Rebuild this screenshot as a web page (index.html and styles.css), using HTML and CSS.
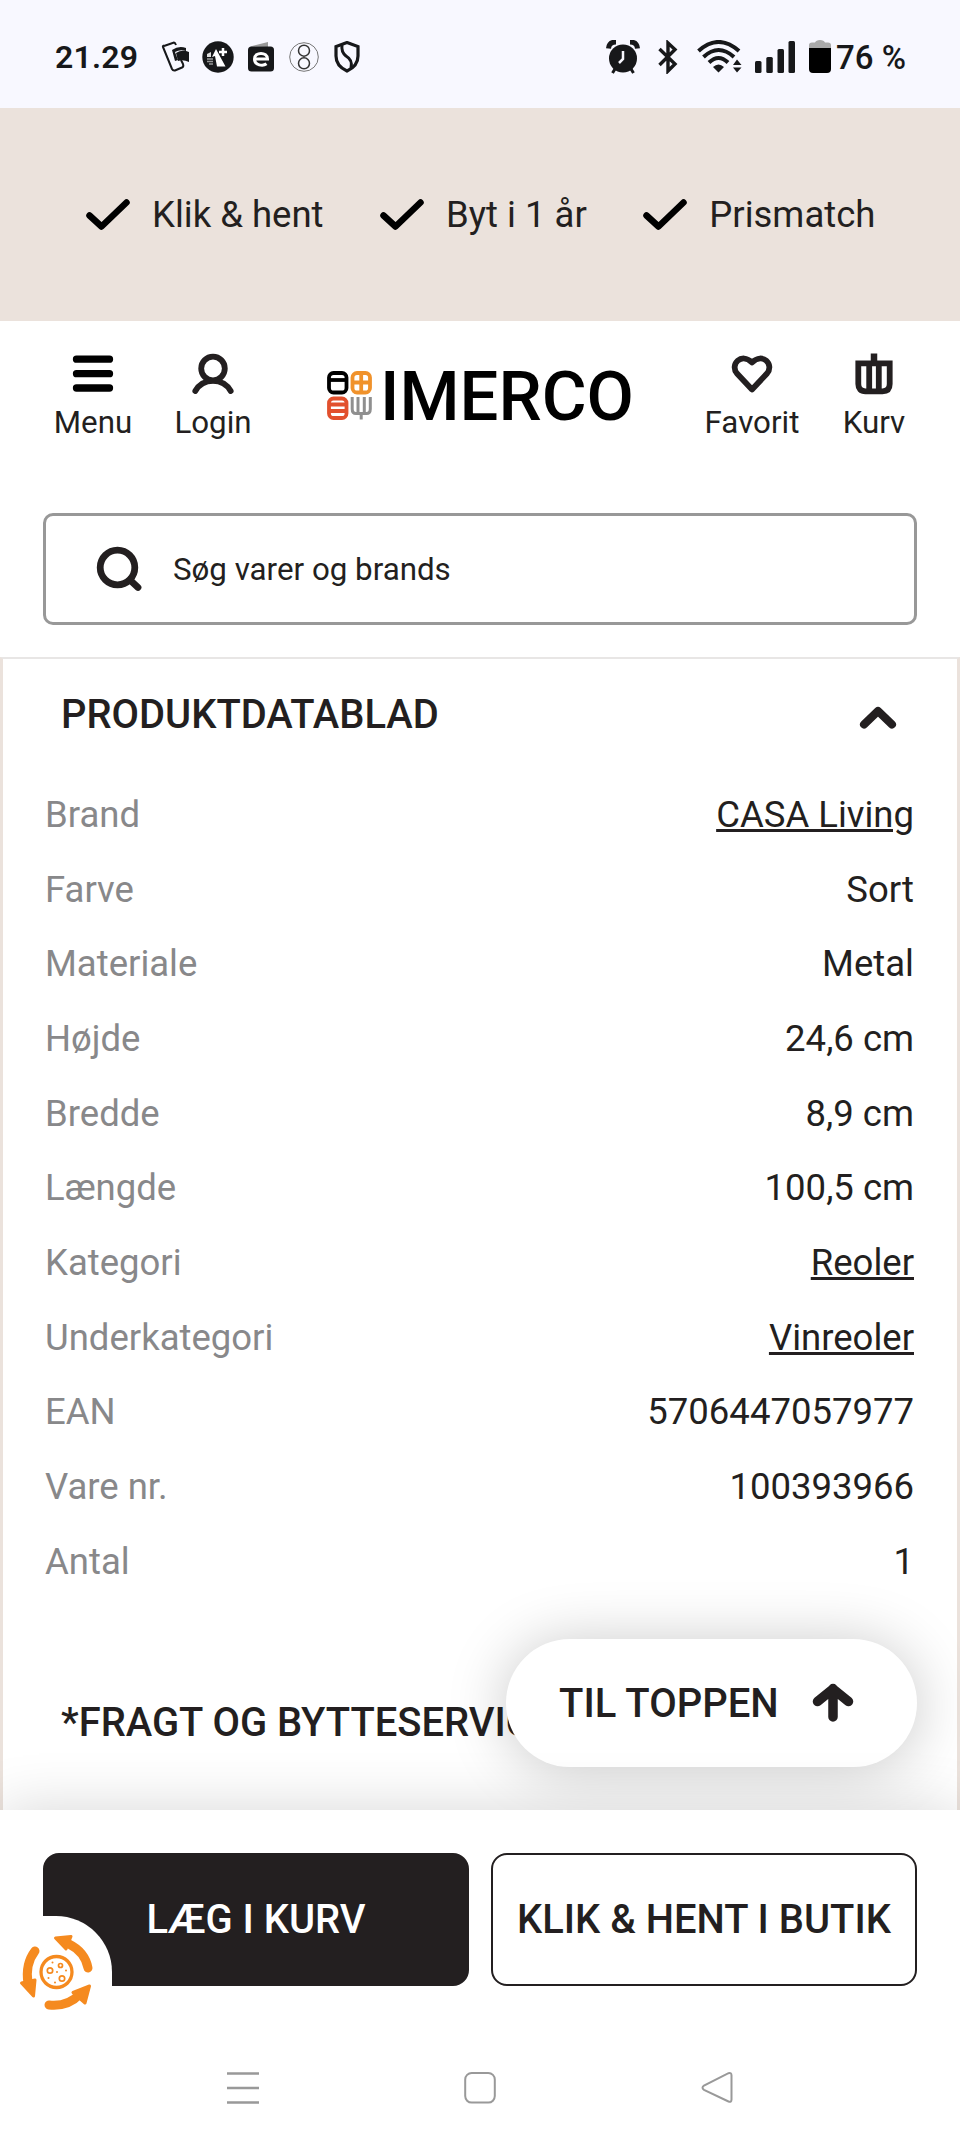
FILE: index.html
```html
<!DOCTYPE html>
<html lang="da">
<head>
  <meta charset="UTF-8" />
  <meta name="viewport" content="width=device-width, initial-scale=1.0"/>
  <title>Imerco</title>
  <link rel="stylesheet" href="styles.css">
</head>
<body>
  <div class="status-bar">
    <span class="time">21.29</span>
    <svg class="s-phone" width="30" height="32" viewBox="0 0 30 32">
      <path d="M3 5 L13 1.5 Q14 1.5 15 4 M2 6 Q1.5 5 3 4.500 M2 6 L11 28 Q12 30 14 29.500 L21 26.500 Q23 25.500 22 23 L20 19" fill="none" stroke="#17181a" stroke-width="2"/>
      <path d="M11 9 Q18 4 25 7 L25 10 Q19 8 14 11 L17 19 L14 20 Z" fill="#17181a"/>
      <path d="M15 12 Q21 8 28 11 V21 Q22 18 17 20 Z" fill="#17181a"/>
    </svg>
    <svg class="s-chess" width="32" height="32" viewBox="0 0 32 32">
      <circle cx="16" cy="16" r="15.700" fill="#17181a"/>
      <path d="M14 8 L23.500 25.500 H15 L13 15 L10 16 Z" fill="#fff"/>
      <path d="M21 7 V15 M17 11 H25" stroke="#fff" stroke-width="2.500"/>
      <path d="M5 13 L9 11 V16 H5 Z" fill="#ddd"/>
      <path d="M5 18 H11 M5 20.500 H11 M7 23 H11" stroke="#999" stroke-width="1.500"/>
    </svg>
    <svg class="s-e" width="26" height="32" viewBox="0 0 26 32">
      <path d="M2 5.500 L20 1 V6 Z" fill="#999"/>
      <rect x="0" y="5.500" width="26" height="25" rx="3.500" fill="#17181a"/>
      <path d="M6.500 18 H19.500 C19.500 10.500 6.500 10.500 6.500 18 C6.500 24.500 15 25.500 18.500 22.800" fill="none" stroke="#fff" stroke-width="3"/>
    </svg>
    <svg class="s-eight" width="30" height="32" viewBox="0 0 30 32">
      <circle cx="15" cy="16" r="14.300" fill="none" stroke="#777" stroke-width="1"/>
      <circle cx="15" cy="9.700" r="5.500" fill="none" stroke="#333" stroke-width="1.500"/>
      <circle cx="15" cy="22.300" r="5.500" fill="none" stroke="#333" stroke-width="1.500"/>
    </svg>
    <svg class="s-shield" width="26" height="32" viewBox="0 0 26 32">
      <path d="M13 1.500 L24 5.500 V15 Q24 25 13 30 Q2 25 2 15 V5.500 Z" fill="none" stroke="#17181a" stroke-width="3.200"/>
      <path d="M8 4 Q7 11 12 15 Q19 19 17 27" fill="none" stroke="#17181a" stroke-width="3"/>
    </svg>
    <svg class="s-alarm" width="34" height="34" viewBox="0 0 34 34">
      <circle cx="17" cy="18.500" r="14" fill="#17181a"/>
      <path d="M2.500 8.500 Q3 2 10 2 M24 2 Q31 2 31.500 8.500" fill="none" stroke="#17181a" stroke-width="5"/>
      <path d="M9 29 L6.500 33 M25 29 L27.500 33" stroke="#17181a" stroke-width="3"/>
      <path d="M17 11 V19 L13 23" fill="none" stroke="#f8f8ff" stroke-width="2.500"/>
    </svg>
    <svg class="s-bt" width="20" height="34" viewBox="0 0 20 34">
      <path d="M1.500 9 L17 24 L10 31 V3 L17 9.500 L1.500 25" fill="none" stroke="#17181a" stroke-width="3.400"/>
    </svg>
    <svg class="s-wifi" width="46" height="34" viewBox="0 0 46 34">
      <path d="M1.500 11 Q21.500 -7 42 11 M6.500 17 Q21.500 3 37 17 M12 22.500 Q21.500 13.500 31 22.500" fill="none" stroke="#17181a" stroke-width="4"/>
      <path d="M16 27 Q21.500 22 27 27 L21.500 32.500 Z M36 25 L40 19.500 L44.500 25 Z M36 27.500 H44.500 L40 32.500 Z" fill="#17181a"/>
    </svg>
    <svg class="s-signal" width="40" height="34" viewBox="0 0 40 34">
      <g fill="#17181a">
        <rect x="0" y="21" width="6.500" height="12" rx="1.500"/>
        <rect x="11.300" y="17" width="6.500" height="16" rx="1.500"/>
        <rect x="22.500" y="9" width="6.500" height="24" rx="1.500"/>
        <rect x="33.500" y="1" width="6.500" height="32" rx="1.500"/>
      </g>
    </svg>
    <svg class="s-battery" width="22" height="34" viewBox="0 0 22 34">
      <path d="M0 8 V5 Q0 2.500 3 2.500 H6 Q7 0 11 0 Q15 0 16 2.500 H19 Q22 2.500 22 5 V8 Z" fill="#aaa"/>
      <path d="M0 8 H22 V29 Q22 33 18 33 H4 Q0 33 0 29 Z" fill="#000"/>
    </svg>
    <span class="percent">76 %</span>
  </div>

  <div class="usp-bar">
    <div class="usp">
      <svg width="44" height="32" viewBox="0 0 44 32"><path d="M3.500 16.500 L15.500 27.500 L40.500 3.500" fill="none" stroke="#000" stroke-width="6.500" stroke-linecap="round" stroke-linejoin="round"/></svg>
      <span>Klik &amp; hent</span>
    </div>
    <div class="usp">
      <svg width="44" height="32" viewBox="0 0 44 32"><path d="M3.500 16.500 L15.500 27.500 L40.500 3.500" fill="none" stroke="#000" stroke-width="6.500" stroke-linecap="round" stroke-linejoin="round"/></svg>
      <span>Byt i 1 år</span>
    </div>
    <div class="usp">
      <svg width="44" height="32" viewBox="0 0 44 32"><path d="M3.500 16.500 L15.500 27.500 L40.500 3.500" fill="none" stroke="#000" stroke-width="6.500" stroke-linecap="round" stroke-linejoin="round"/></svg>
      <span>Prismatch</span>
    </div>
  </div>

  <header class="header">
    <div class="top-nav">
      <a class="nav-item menu">
        <svg width="42" height="42" viewBox="0 0 42 42"><path d="M4.500 6.200 H37.500 M4.500 20.700 H37.500 M4.500 35 H37.500" stroke="#000" stroke-width="7.300" stroke-linecap="round"/></svg>
        <span>Menu</span>
      </a>
      <a class="nav-item login">
        <svg width="42" height="42" viewBox="0 0 42 42"><g fill="none" stroke="#231f20" stroke-width="5.800" stroke-linecap="round"><circle cx="21" cy="15.500" r="11.800"/><path d="M3.300 38 C11 24.500 31 24.500 38.700 38"/></g></svg>
        <span>Login</span>
      </a>
      <svg class="logo" width="306" height="50" viewBox="0 0 306 50">
        <g fill="none" stroke-width="3.800">
          <g stroke="#000"><rect x="2" y="2" width="17.500" height="19.500" rx="4.500"/><path d="M2 9 H19.500"/></g>
          <g stroke="#f0922b"><rect x="25.500" y="2" width="17.500" height="19.500" rx="4.500"/><path d="M25.500 11.500 H43 M34.200 2 V21.500"/></g>
          <g stroke="#e2502d"><rect x="2" y="27.500" width="17.500" height="19.500" rx="4.500"/><path d="M2 33.500 H19.500 M2 40 H19.500"/></g>
          <path d="M25.200 26 V38 Q25.200 42.500 29 42.500 H39.500 Q43.300 42.500 43.300 38 V26 M31 26 V42 M37.300 26 V42 M34.200 42 V48.500" stroke="#8f8f8f" stroke-width="3"/>
        </g>
        <text class="wordmark" x="53" y="49" textLength="254" lengthAdjust="spacingAndGlyphs">IMERCO</text>
      </svg>
      <a class="nav-item favorit">
        <svg width="42" height="42" viewBox="0 0 42 42"><path d="M21 36.500 L6 20.500 C-1.500 11.500 10.500 -1 21 9.500 C31.500 -1 43.500 11.500 36 20.500 Z" fill="none" stroke="#231f20" stroke-width="5.800" stroke-linejoin="round"/></svg>
        <span>Favorit</span>
      </a>
      <a class="nav-item kurv">
        <svg width="42" height="42" viewBox="0 0 42 42"><path d="M5.300 10.300 H36.700 V31 Q36.700 38.300 29.500 38.300 H12.500 Q5.300 38.300 5.300 31 Z M16.200 10 V38 M25.800 10 V38" fill="none" stroke="#231f20" stroke-width="5.800"/><path d="M21 0.500 V10" stroke="#231f20" stroke-width="6.500"/></svg>
        <span>Kurv</span>
      </a>
    </div>
    <div class="search">
      <svg width="48" height="48" viewBox="0 0 48 48"><g fill="none" stroke="#231f20" stroke-width="6.800" stroke-linecap="round"><circle cx="22.500" cy="22.500" r="17.300"/><path d="M35 35 L43 42.500"/></g></svg>
      <span>Søg varer og brands</span>
    </div>
  </header>

  <main class="panel">
    <div class="section-title">
      <h2>PRODUKTDATABLAD</h2>
      <svg width="38" height="24" viewBox="0 0 38 24"><path d="M5 18.500 L19 5 L33 18.500" fill="none" stroke="#231f20" stroke-width="8" stroke-linecap="round" stroke-linejoin="round"/></svg>
    </div>
    <dl class="specs">
      <div class="spec"><dt>Brand</dt><dd class="link">CASA Living</dd></div>
      <div class="spec"><dt>Farve</dt><dd>Sort</dd></div>
      <div class="spec"><dt>Materiale</dt><dd>Metal</dd></div>
      <div class="spec"><dt>Højde</dt><dd>24,6 cm</dd></div>
      <div class="spec"><dt>Bredde</dt><dd>8,9 cm</dd></div>
      <div class="spec"><dt>Længde</dt><dd>100,5 cm</dd></div>
      <div class="spec"><dt>Kategori</dt><dd class="link">Reoler</dd></div>
      <div class="spec"><dt>Underkategori</dt><dd class="link">Vinreoler</dd></div>
      <div class="spec"><dt>EAN</dt><dd>5706447057977</dd></div>
      <div class="spec"><dt>Vare nr.</dt><dd>100393966</dd></div>
      <div class="spec"><dt>Antal</dt><dd>1</dd></div>
    </dl>
    <div class="section-title">
      <h2>*FRAGT OG BYTTESERVICE</h2>
    </div>
    <a class="to-top">
      <span>TIL TOPPEN</span>
      <svg width="42" height="40" viewBox="0 0 42 40"><path d="M21 5.500 V34 M5.500 18.500 L21 6 L36.500 18.500" fill="none" stroke="#231f20" stroke-width="9.500" stroke-linecap="round" stroke-linejoin="round"/></svg>
    </a>
  </main>

  <div class="buy-bar">
    <button class="btn btn-dark">LÆG I KURV</button>
    <button class="btn btn-light">KLIK &amp; HENT I BUTIK</button>
    <div class="cookie">
      <svg width="76" height="80" viewBox="0 0 76 80">
        <g fill="none" stroke="#f58a1f" stroke-width="9" stroke-linecap="round">
          <path d="M50 11 Q66 19 69 35"/>
          <path d="M30 72 Q49 74 61 61"/>
          <path d="M16 18 Q6 31 9 50"/>
        </g>
        <g fill="#f58a1f" stroke="#f58a1f" stroke-width="3" stroke-linejoin="round">
          <path d="M36.500 5 L52 3.500 L47 16 Z"/>
          <path d="M70.500 53 L66 70 L54 59.500 Z"/>
          <path d="M2.500 50 L16 47 L14.500 63 Z"/>
        </g>
        <circle cx="37.500" cy="39" r="15.500" fill="#fff" stroke="#f58a1f" stroke-width="3.300"/>
        <g fill="none" stroke="#f58a1f" stroke-width="1.700">
          <circle cx="31" cy="37.500" r="2.700"/>
          <circle cx="41.500" cy="32.500" r="2"/>
          <circle cx="43" cy="45.500" r="2.700"/>
        </g>
        <g fill="#f58a1f">
          <circle cx="33.500" cy="29.500" r="1"/><circle cx="38" cy="39" r="1"/><circle cx="47" cy="37.500" r="1"/>
          <circle cx="29.500" cy="45" r="1"/><circle cx="36" cy="49.500" r="1"/>
        </g>
      </svg>
    </div>
  </div>

  <div class="system-nav">
    <svg width="32" height="34" viewBox="0 0 32 34"><path d="M0 2.500 H32 M0 17 H32 M0 31.500 H32" stroke="#999" stroke-width="2.500"/></svg>
    <svg width="32" height="34" viewBox="0 0 32 34"><rect x="1.200" y="2" width="29.600" height="29.600" rx="6.500" fill="none" stroke="#999" stroke-width="2"/></svg>
    <svg width="32" height="34" viewBox="0 0 32 34"><path d="M27.500 2.200 Q30.500 1.300 30.500 4.500 V28.500 Q30.500 31.700 27.500 30.500 L3 18.800 Q0 17 3 14.500 Z" fill="none" stroke="#999" stroke-width="2"/></svg>
  </div>
</body>
</html>
```
FILE: styles.css
```css
* {
  box-sizing: border-box;
}
body {
  margin: 0;
  width: 960px;
  height: 2146px;
  overflow: hidden;
  background: #fff;
  color: #231f20;
  font-family: Roboto, "Liberation Sans", sans-serif;
}
svg {
  display: block;
  flex: none;
}
span, h2 {
  white-space: nowrap;
}

/* phone status bar */
.status-bar {
  height: 108px;
  padding: 6px 0 0 55px;
  display: flex;
  align-items: center;
  background: #f8f8ff;
  color: #17181a;
}
.time {
  width: 106px;
  font-size: 32px;
  font-weight: 600;
  letter-spacing: 0.2px;
}
.s-chess { margin-left: 11px; }
.s-e { margin-left: 14px; }
.s-eight { margin-left: 15px; }
.s-shield { margin-left: 15px; }
.s-alarm { margin-left: 246px; }
.s-bt { margin-left: 18px; }
.s-wifi { margin-left: 19px; }
.s-signal { margin-left: 12px; }
.s-battery { margin-left: 14px; }
.percent {
  margin-left: 5px;
  font-size: 33px;
  font-weight: 500;
}

/* selling points */
.usp-bar {
  height: 213px;
  padding: 0 0 0 86px;
  display: flex;
  align-items: center;
  background: #ebe2dc;
  font-size: 36.500px;
}
.usp {
  display: flex;
  align-items: center;
  gap: 22px;
  margin-right: 56.500px;
}

/* header */
.header {
  height: 336px;
}
.top-nav {
  height: 192px;
  padding: 32px 0 0 51px;
  display: flex;
  align-items: flex-start;
}
.nav-item {
  display: flex;
  flex-direction: column;
  align-items: center;
  gap: 10px;
  font-size: 31.300px;
  line-height: 36px;
}
.menu { width: 84px; }
.login { width: 84px; margin-left: 36px; }
.favorit { width: 100px; margin-left: 69px; }
.kurv { width: 70px; margin-left: 37px; }
.logo {
  margin: 18px 0 0 72px;
  overflow: visible;
}
.wordmark {
  font-family: Roboto, sans-serif;
  font-size: 68px;
  font-weight: 500;
  fill: #000;
}
.search {
  height: 112px;
  margin: 0 43px;
  padding-left: 49px;
  display: flex;
  align-items: center;
  gap: 30px;
  border: 3px solid #989898;
  border-radius: 10px;
  font-size: 31.300px;
}

/* product data */
.panel {
  position: relative;
  height: 1153px;
  border: 3px solid #ebe2dc;
  border-top: 2px solid #e8e6e5;
  border-bottom: 0;
}
.section-title {
  height: 110px;
  padding: 0 60px 0 58px;
  display: flex;
  align-items: center;
  justify-content: space-between;
}
.section-title svg {
  margin-top: 8px;
}
h2 {
  margin: 0;
  font-size: 39.900px;
  font-weight: 500;
}
.specs {
  margin: 8px 43px 69px 42px;
  font-size: 36.500px;
}
.spec {
  height: 74.700px;
  display: flex;
  align-items: center;
  justify-content: space-between;
}
dt {
  color: #88888a;
}
dd {
  margin: 0;
}
.link {
  text-decoration: underline;
  text-decoration-thickness: 3px;
}
.to-top {
  position: absolute;
  right: 40px;
  bottom: 43px;
  width: 411px;
  height: 128px;
  padding: 0 63px 0 53px;
  display: flex;
  align-items: center;
  justify-content: space-between;
  border-radius: 64px;
  background: #fff;
  box-shadow: 0 3px 60px rgba(0,0,0,0.22);
  font-size: 40px;
  font-weight: 500;
}

/* sticky buy buttons */
.buy-bar {
  position: relative;
  height: 220px;
  padding: 43px 43px 0;
  display: flex;
  gap: 22px;
  background: #fff;
  box-shadow: 0 0 56px rgba(0,0,0,0.16);
}
.btn {
  flex: 1;
  height: 133px;
  padding: 0;
  border: 2px solid #231f20;
  border-radius: 16px;
  font-family: inherit;
  font-size: 39.900px;
  font-weight: 500;
  white-space: nowrap;
}
.btn-dark {
  background: #231f20;
  color: #fff;
}
.btn-light {
  background: #fff;
  color: #231f20;
}
.cookie {
  position: absolute;
  left: 0;
  top: 106px;
  width: 112px;
  height: 112px;
  padding: 17px 0 0 19px;
  background: #fff;
  border-radius: 0 56px 0 0;
}

/* android navigation */
.system-nav {
  position: relative;
  height: 116px;
  padding: 0 227px;
  display: flex;
  align-items: center;
  justify-content: space-between;
  background: #fff;
}
```
